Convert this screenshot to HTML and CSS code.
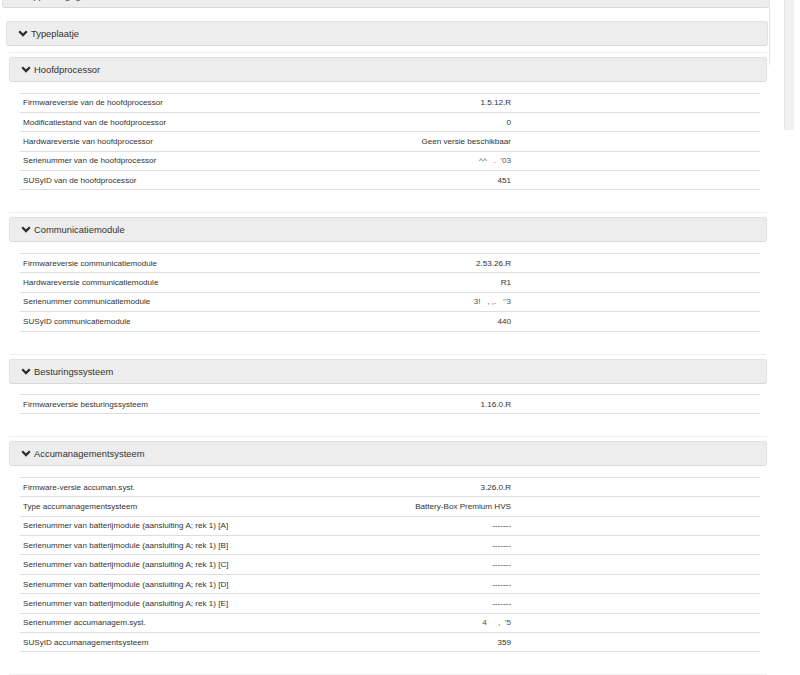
FILE: index.html
```html
<!DOCTYPE html>
<html lang="nl">
<head>
  <meta charset="UTF-8">
  <title>Apparaatgegevens</title>
  <link rel="stylesheet" href="styles.css">
</head>
<body>
  <div class="panel outer">
    <div class="panel-heading">
      <svg class="chev" viewBox="0 0 10 7"><polyline points="1.2,1.2 5,5 8.8,1.2"/></svg>
      Apparaatgegevens
    </div>
    <div class="outer-body">

      <div class="panel">
        <div class="panel-heading">
          <svg class="chev" viewBox="0 0 10 7"><polyline points="1.2,1.2 5,5 8.8,1.2"/></svg>
          Typeplaatje
        </div>
        <div class="panel-body">

          <div class="sub">
            <div class="panel-heading">
              <svg class="chev" viewBox="0 0 10 7"><polyline points="1.2,1.2 5,5 8.8,1.2"/></svg>
              Hoofdprocessor
            </div>
            <div class="sub-body">
              <div class="rows">
                <div class="row"><span>Firmwareversie van de hoofdprocessor</span><span class="val">1.5.12.R</span><span></span></div>
                <div class="row"><span>Modificatiestand van de hoofdprocessor</span><span class="val">0</span><span></span></div>
                <div class="row"><span>Hardwareversie van hoofdprocessor</span><span class="val">Geen versie beschikbaar</span><span></span></div>
                <div class="row"><span>Serienummer van de hoofdprocessor</span><span class="val masked">^^ &nbsp; . &nbsp;’03</span><span></span></div>
                <div class="row"><span>SUSyID van de hoofdprocessor</span><span class="val">451</span><span></span></div>
              </div>
            </div>
          </div>

          <div class="sub">
            <div class="panel-heading">
              <svg class="chev" viewBox="0 0 10 7"><polyline points="1.2,1.2 5,5 8.8,1.2"/></svg>
              Communicatiemodule
            </div>
            <div class="sub-body">
              <div class="rows">
                <div class="row"><span>Firmwareversie communicatiemodule</span><span class="val">2.53.26.R</span><span></span></div>
                <div class="row"><span>Hardwareversie communicatiemodule</span><span class="val">R1</span><span></span></div>
                <div class="row"><span>Serienummer communicatiemodule</span><span class="val masked">3! &nbsp; , ,. &nbsp; ’’3</span><span></span></div>
                <div class="row"><span>SUSyID communicatiemodule</span><span class="val">440</span><span></span></div>
              </div>
            </div>
          </div>

          <div class="sub">
            <div class="panel-heading">
              <svg class="chev" viewBox="0 0 10 7"><polyline points="1.2,1.2 5,5 8.8,1.2"/></svg>
              Besturingssysteem
            </div>
            <div class="sub-body">
              <div class="rows">
                <div class="row"><span>Firmwareversie besturingssysteem</span><span class="val">1.16.0.R</span><span></span></div>
              </div>
            </div>
          </div>

          <div class="sub">
            <div class="panel-heading">
              <svg class="chev" viewBox="0 0 10 7"><polyline points="1.2,1.2 5,5 8.8,1.2"/></svg>
              Accumanagementsysteem
            </div>
            <div class="sub-body">
              <div class="rows">
                <div class="row"><span>Firmware-versie accuman.syst.</span><span class="val">3.26.0.R</span><span></span></div>
                <div class="row"><span>Type accumanagementsysteem</span><span class="val">Battery-Box Premium HVS</span><span></span></div>
                <div class="row"><span>Serienummer van batterijmodule (aansluiting A; rek 1) [A]</span><span class="val">-------</span><span></span></div>
                <div class="row"><span>Serienummer van batterijmodule (aansluiting A; rek 1) [B]</span><span class="val">-------</span><span></span></div>
                <div class="row"><span>Serienummer van batterijmodule (aansluiting A; rek 1) [C]</span><span class="val">-------</span><span></span></div>
                <div class="row"><span>Serienummer van batterijmodule (aansluiting A; rek 1) [D]</span><span class="val">-------</span><span></span></div>
                <div class="row"><span>Serienummer van batterijmodule (aansluiting A; rek 1) [E]</span><span class="val">-------</span><span></span></div>
                <div class="row"><span>Serienummer accumanagem.syst.</span><span class="val masked">4 &nbsp; &nbsp; , &nbsp;’5</span><span></span></div>
                <div class="row"><span>SUSyID accumanagementsysteem</span><span class="val">359</span><span></span></div>
              </div>
            </div>
          </div>

          <div class="sub"></div>

        </div>
      </div>

    </div>
  </div>

  <div class="scroll-thumb"></div>
</body>
</html>
```

FILE: styles.css
```css
body {
  margin: 0;
  font-family: "Liberation Sans", Arial, sans-serif;
  color: #333;
  background: #fff;
}

.outer {
  width: 768px;
  margin: -17px 0 0 2px;
}

.panel-heading {
  display: flex;
  align-items: center;
  gap: 3px;
  box-sizing: border-box;
  height: 25px;
  padding-left: 11px;
  background: #ededed;
  border: 1px solid #e3e3e3;
  border-bottom-color: #d8d8d8;
  border-radius: 3px;
  font-size: 9.4px;
  color: #333;
}

.chev {
  width: 10px;
  height: 7px;
  flex: none;
}

.chev polyline {
  fill: none;
  stroke: #2b2b2b;
  stroke-width: 2.3;
}

.outer-body {
  padding: 13px 1px 0 4px;
  border-right: 1px solid;
  border-image: linear-gradient(#e4e4e4 0, #e4e4e4 55px, rgba(228,228,228,0) 60px) 1;
}

.panel-body {
  padding: 6px 1px 0 3px;
}

.sub {
  border-top: 1px solid #f0f0f0;
  padding-top: 4px;
}

.sub .panel-heading {
  padding-left: 11px;
}

.sub-body {
  padding: 10.5px 7px 22px 11px;
}

.rows {
  border-top: 1px solid #dddddd;
  font-size: 8.1px;
}

.row {
  display: grid;
  grid-template-columns: 370px 126px 1fr;
  align-items: center;
  box-sizing: border-box;
  height: 19.4px;
  border-bottom: 1px solid #dddddd;
  padding-left: 3px;
}

.val {
  text-align: right;
  padding-right: 8px;
}

.masked {
  color: #555;
  white-space: nowrap;
}

.scroll-thumb {
  position: fixed;
  top: 0;
  right: 6px;
  width: 9px;
  height: 130px;
  background: #f1f1f1;
  border-left: 1px solid #e6e6e6;
}
```
